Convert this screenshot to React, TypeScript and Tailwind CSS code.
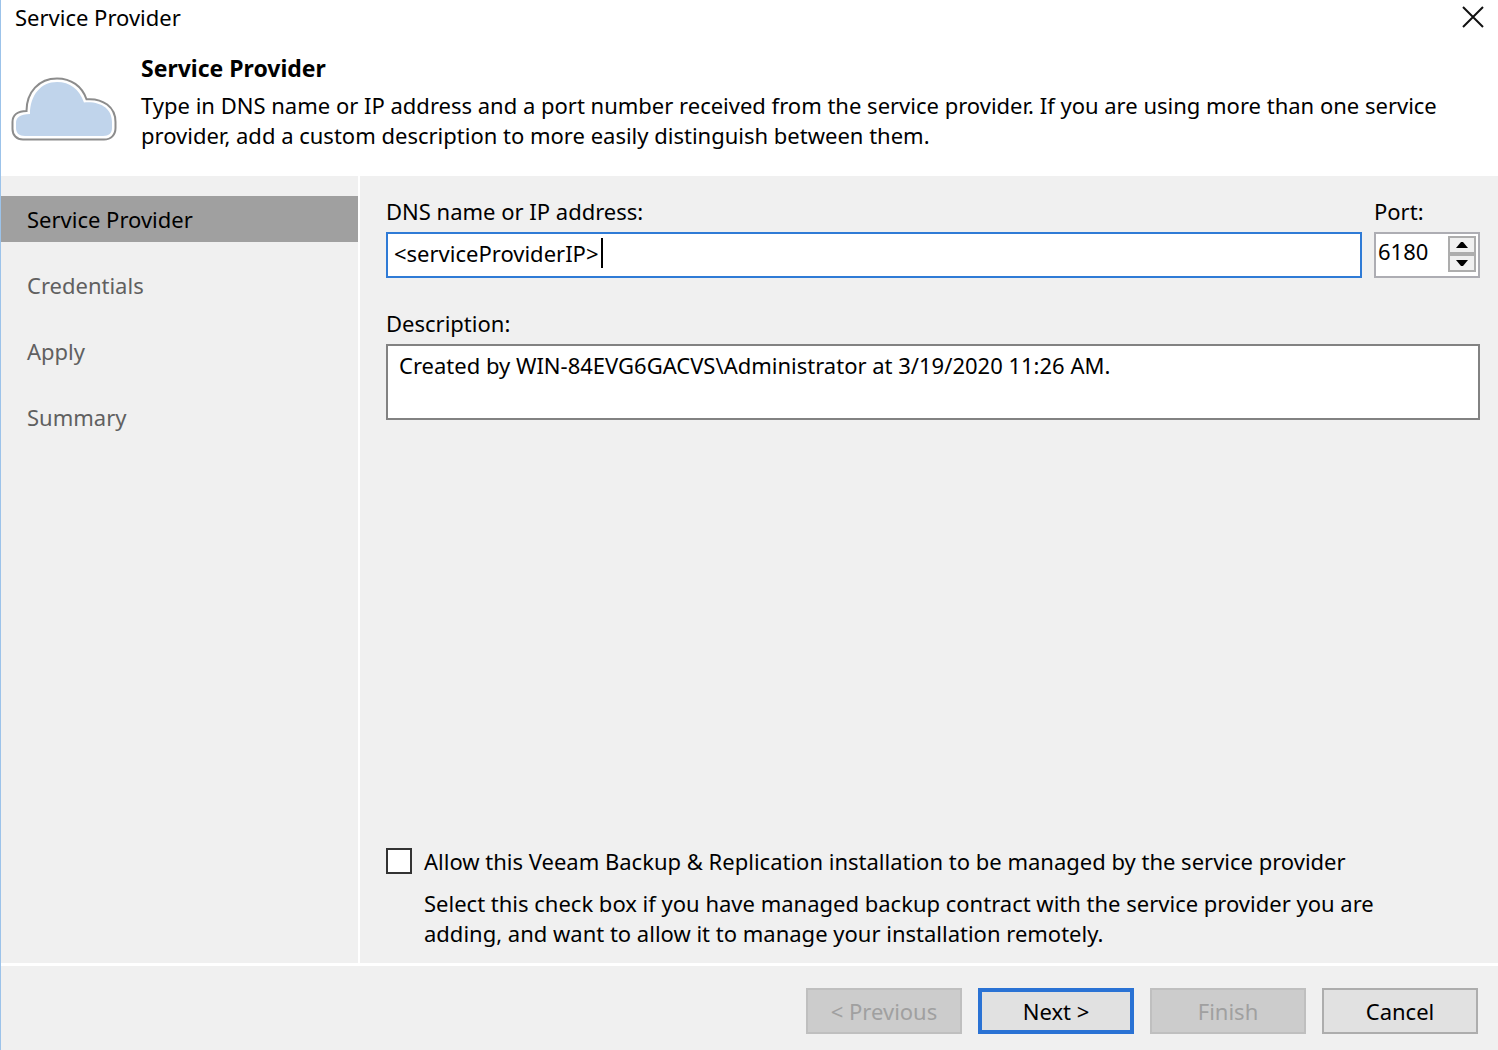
import { useState } from 'react'

const steps = ['Service Provider', 'Credentials', 'Apply', 'Summary']

const buttonBase = 'w-[156px] h-[46px] flex items-center justify-center'
const buttonDisabled = 'border-2 border-[#bfbfbf] bg-[#cccccc] text-[#a0a0a0]'

function CloudIcon() {
  return (
    <svg width="106" height="64" viewBox="0 0 106 64" fill="none" aria-hidden="true">
      <path
        d="M12 62.5C5.500 62.5 1.5 58 1.5 52V45C1.5 38 7 34 15.5 34C15.500 15 28 1.5 46 1.5C60 1.5 71 9 75.500 22.300C92 21 104.500 30 104.500 45V51C104.500 58 100 62.500 93 62.500Z"
        fill="#ffffff"
        stroke="#8c8c8c"
        strokeWidth="2"
      />
      <path
        d="M14 59C8 59 5 56 5 51V46C5 40 9 37.500 19 37C19 18 30 5 46 5C59 5 68 12 73 25.500C90 24 101 32 101 45V51C101 56 98 59 92 59Z"
        fill="#c0d4eb"
      />
    </svg>
  )
}

export default function App() {
  const [step, setStep] = useState(0)
  const [address, setAddress] = useState('<serviceProviderIP>')
  const [port, setPort] = useState(6180)
  const [description, setDescription] = useState('Created by WIN-84EVG6GACVS\\Administrator at 3/19/2020 11:26 AM.')
  const [managed, setManaged] = useState(false)

  return (
    <div className="min-h-screen flex flex-col border-l border-[#9cc3ea] bg-[#f0f0f0] font-['Noto_Sans','Open_Sans',sans-serif] text-[22px] leading-[30px] text-black">
      <div className="h-[34px] flex items-center justify-between bg-white px-[14px]">
        <span>Service Provider</span>
        <button aria-label="Close">
          <svg width="22" height="22" viewBox="0 0 22 22" stroke="#111111" strokeWidth="2" aria-hidden="true">
            <path d="M1 1L21 21M21 1L1 21" />
          </svg>
        </button>
      </div>

      <header className="flex gap-6 bg-white pl-[10px] pr-8 pt-[19px] pb-[26px]">
        <div className="shrink-0 pt-6">
          <CloudIcon />
        </div>
        <div>
          <h1 className="text-[23px] font-bold mb-[7px]">Service Provider</h1>
          <p>
            Type in DNS name or IP address and a port number received from the service provider. If you are using more
            than one service provider, add a custom description to more easily distinguish between them.
          </p>
        </div>
      </header>

      <div className="flex flex-1">
        <nav className="w-[359px] shrink-0 flex flex-col gap-5 border-r-2 border-white pt-5">
          {steps.map((name, i) => (
            <button
              key={name}
              onClick={() => setStep(i)}
              className={`h-[46px] pl-[26px] text-left ${i === step ? 'bg-[#a0a0a0] text-black' : 'text-[#606060]'}`}
            >
              {name}
            </button>
          ))}
        </nav>

        <main className="flex-1 min-w-0 flex flex-col pl-[26px] pr-[18px] pt-5 pb-[15px]">
          <div className="flex gap-3">
            <div className="flex-1 min-w-0">
              <label htmlFor="address" className="block mb-1.5">DNS name or IP address:</label>
              <div className="h-[46px] flex items-center border-2 border-[#2f7bd6] bg-white pl-[6px] pb-1">
                <input
                  id="address"
                  value={address}
                  onChange={e => setAddress(e.target.value)}
                  className="field-sizing-content max-w-full outline-none caret-transparent"
                />
                <span className="w-0.5 h-[30px] ml-0.5 bg-black" />
              </div>
            </div>
            <div className="w-[106px]">
              <label htmlFor="port" className="block mb-1.5">Port:</label>
              <div className="h-[46px] flex border-2 border-[#adadb3] bg-white">
                <input
                  id="port"
                  value={port}
                  onChange={e => setPort(Number(e.target.value) || 0)}
                  className="flex-1 min-w-0 pl-0.5 pb-2 outline-none"
                />
                <div className="w-7 mr-0.5 mt-0.5 mb-1 flex flex-col">
                  <button
                    aria-label="Increase port"
                    onClick={() => setPort(port + 1)}
                    className="flex-1 flex items-center justify-center border-2 border-[#adadad] bg-[#f0f0f0]"
                  >
                    <svg width="12" height="6" viewBox="0 0 12 6" aria-hidden="true"><path d="M5 0H7L12 6H0Z" /></svg>
                  </button>
                  <button
                    aria-label="Decrease port"
                    onClick={() => setPort(port - 1)}
                    className="flex-1 flex items-center justify-center border-2 border-[#adadad] bg-[#f0f0f0]"
                  >
                    <svg width="12" height="6" viewBox="0 0 12 6" aria-hidden="true"><path d="M0 0H12L7 6H5Z" /></svg>
                  </button>
                </div>
              </div>
            </div>
          </div>

          <label htmlFor="description" className="mt-[30px] mb-1.5">Description:</label>
          <textarea
            id="description"
            rows={2}
            value={description}
            onChange={e => setDescription(e.target.value)}
            className="h-[76px] shrink-0 resize-none border-2 border-[#828282] bg-white pl-[11px] pr-2 py-1 outline-none"
          />

          <div className="mt-auto flex gap-3">
            <input
              id="managed"
              type="checkbox"
              checked={managed}
              onChange={e => setManaged(e.target.checked)}
              className="size-[26px] mt-0.5 shrink-0 appearance-none border-2 border-[#333333] bg-white checked:bg-[#333333]"
            />
            <div>
              <label htmlFor="managed">
                Allow this Veeam Backup &amp; Replication installation to be managed by the service provider
              </label>
              <p className="mt-3 pr-16">
                Select this check box if you have managed backup contract with the service provider you are adding, and
                want to allow it to manage your installation remotely.
              </p>
            </div>
          </div>
        </main>
      </div>

      <footer className="flex justify-end gap-4 border-t-[3px] border-white pr-5 pt-[22px] pb-4">
        <button disabled className={`${buttonBase} ${buttonDisabled}`}>&lt; Previous</button>
        <button className={`${buttonBase} border-4 border-[#2a72d4] bg-[#e1e1e1]`}>Next &gt;</button>
        <button disabled className={`${buttonBase} ${buttonDisabled}`}>Finish</button>
        <button className={`${buttonBase} border-2 border-[#adadad] bg-[#e1e1e1]`}>Cancel</button>
      </footer>
    </div>
  )
}
